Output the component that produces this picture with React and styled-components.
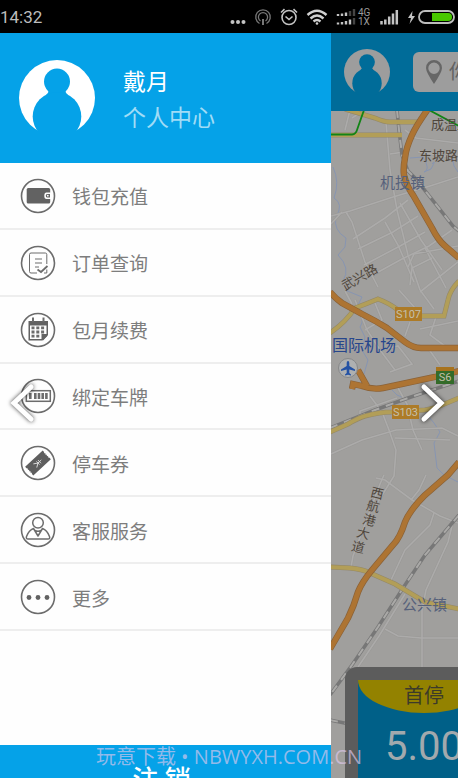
import React from 'react';
import styled, { createGlobalStyle } from 'styled-components';

const GlobalStyle = createGlobalStyle`
  * {
    box-sizing: border-box;
  }
  body {
    margin: 0;
    background: #000;
    font-family: Roboto, 'Noto Sans CJK SC', sans-serif;
  }
`;

const Phone = styled.div`
  position: relative;
  display: flex;
  flex-direction: column;
  height: 100vh;
  overflow: hidden;
`;

const StatusBar = styled.header`
  display: flex;
  flex: 0 0 33px;
  align-items: center;
  justify-content: space-between;
  padding-right: 3px;
  background: #000;
  color: #bdbdbd;
  font-size: 17px;
  svg {
    display: block;
  }
`;

const StatusIcons = styled.div`
  display: flex;
  align-items: center;
  gap: 8px;
`;

const StatusGroup = styled.div`
  display: flex;
  align-items: center;
  gap: 2px;
`;

const NetworkType = styled.div`
  width: 13px;
  font-size: 10px;
  line-height: 9px;
  color: #9a9a9a;
`;

const Screen = styled.div`
  display: flex;
  flex: 1;
  min-height: 0;
`;

const Drawer = styled.aside`
  display: flex;
  flex-direction: column;
  flex: 0 0 331px;
  background: #fefefe;
`;

const Profile = styled.div`
  display: flex;
  flex: 0 0 130px;
  align-items: center;
  gap: 28px;
  padding-left: 19px;
  background: #05a2e8;
`;

const ProfileText = styled.div`
  padding-top: 5px;
  font-size: 23px;
  line-height: 36px;
  color: #fff;
`;

const ProfileLink = styled.a`
  display: block;
  color: #a0dcf6;
  text-decoration: none;
`;

const Menu = styled.nav`
  display: grid;
  flex: 0 0 468px;
  grid-auto-rows: 1fr;
`;

const MenuItem = styled.a`
  display: flex;
  align-items: center;
  gap: 16px;
  padding: 1px 0 0 20px;
  border-bottom: 2px solid #eee;
  color: #7d7d7d;
  font-size: 19px;
  text-decoration: none;
`;

const LogoutButton = styled.button`
  flex: 0 0 64px;
  margin-top: 114px;
  padding: 0 8px 0 0;
  border: 0;
  background: #05a2e8;
  color: #fff;
  font-family: inherit;
  font-size: 26px;
  font-weight: 500;
`;

const Home = styled.main`
  display: flex;
  flex: 1;
  flex-direction: column;
  min-width: 0;
  overflow: hidden;
  background: #a09f9d;
`;

const HomeBar = styled.div`
  display: flex;
  flex: 0 0 78px;
  align-items: center;
  gap: 23px;
  padding-left: 13px;
  background: #006c99;
`;

const SearchBox = styled.label`
  display: flex;
  flex: 1 0 260px;
  align-items: center;
  gap: 6px;
  height: 40px;
  padding-left: 12px;
  border-radius: 6px;
  background: #9d9d9d;
`;

const SearchInput = styled.input`
  flex: 1;
  min-width: 0;
  padding: 0;
  border: 0;
  outline: 0;
  background: none;
  font-family: inherit;
  font-size: 20px;
  &::placeholder {
    color: #626262;
  }
`;

const MapArea = styled.div`
  position: relative;
  flex: 1;
  min-height: 0;
  overflow: hidden;
`;

const MapCanvas = styled.svg`
  display: block;
  width: 100%;
  height: 100%;
`;

const PriceCard = styled.section`
  position: absolute;
  top: 556px;
  left: 14px;
  width: 158px;
  height: 160px;
  border: 13px solid #5c5c5c;
  border-radius: 12px;
  background: #006088;
`;

const PriceTitle = styled.h2`
  height: 33px;
  margin: 0;
  border-radius: 0 0 50% 50% / 0 0 100% 100%;
  background: #938200;
  color: #3c3a2a;
  font-size: 20px;
  font-weight: 400;
  line-height: 33px;
  text-align: center;
`;

const Price = styled.div`
  padding: 10px 0 0 27px;
  color: #a2a9ad;
  font-size: 40px;
  line-height: 48px;
`;

const ArrowButton = styled.button`
  position: absolute;
  top: 383px;
  left: ${(props) => (props.$side === 'left' ? '8px' : 'auto')};
  right: ${(props) => (props.$side === 'right' ? '12px' : 'auto')};
  padding: 0;
  border: 0;
  background: none;
  svg {
    display: block;
    overflow: visible;
    filter: drop-shadow(0 0 2px rgba(0, 0, 0, 0.75));
  }
`;

const Watermark = styled.div`
  position: absolute;
  bottom: 7px;
  left: 0;
  width: 100%;
  color: rgba(222, 200, 236, 0.66);
  font-family: 'Open Sans', 'Noto Sans CJK SC', sans-serif;
  font-size: 20px;
  line-height: 28px;
  text-align: center;
  white-space: nowrap;
  pointer-events: none;
`;

const StyledAvatar = styled.svg`
  flex: none;
`;

const Avatar = ({ size, fill, back }) => (
  <StyledAvatar width={size} height={size} viewBox="0 0 76 76" aria-hidden="true">
    <circle cx="38" cy="38" r="38" fill={fill} />
    <g fill={back}>
      <circle cx="38" cy="21.6" r="13" />
      <path d="M29 30Q30.5 32 27 35L38 44L49 35Q45.500 32 47 30Z" />
      <circle cx="38" cy="56.500" r="24.300" />
    </g>
  </StyledAvatar>
);

const MenuIcon = ({ children }) => (
  <svg width="36" height="36" viewBox="0 0 36 36" fill="none" stroke="#6c6c6c" aria-hidden="true">
    <circle cx="18" cy="18" r="16.500" strokeWidth="1.600" />
    {children}
  </svg>
);

const items = [
  {
    label: '钱包充值',
    icon: (
      <>
        <rect x="6.700" y="10" width="23.500" height="15.500" rx="1.500" fill="#626262" stroke="none" />
        <path d="M31 14.500H26.500Q24.300 14.500 24.300 17.700Q24.300 21 26.500 21H31Z" fill="#fefefe" stroke="none" />
        <path d="M30 16H27Q25.800 16 25.800 17.700Q25.800 19.500 27 19.500H30Z" fill="#626262" stroke="none" />
        <circle cx="27.800" cy="17.700" r="0.900" fill="#fefefe" stroke="none" />
      </>
    ),
  },
  {
    label: '订单查询',
    icon: (
      <>
        <path d="M26.800 19V9.500Q26.800 8 25.300 8H11Q9.500 8 9.500 9.500V26.500Q9.500 28 11 28H17M24 28H26.800V24.500" />
        <path d="M15 14H22M15 18H22M15 22H19" />
        <path d="M17.500 24.500L21 27L27.500 21" strokeWidth="1.800" />
      </>
    ),
  },
  {
    label: '包月续费',
    icon: (
      <>
        <path d="M8.500 9H28V23L22.500 28.500H8.500Z" fill="#626262" stroke="none" />
        <path d="M13 5.500V10M23.500 5.500V10" strokeWidth="2" />
        <path d="M10 13.500H26.500V22H21.500V27H10Z" fill="#fefefe" stroke="none" />
        <path d="M11.500 15.800H24.500M11.500 20H24.500M11.500 24.200H20" strokeWidth="2.800" strokeDasharray="3 1.800" />
        <path d="M27.800 23.500L23 28.500V23.500Z" fill="#626262" stroke="none" />
      </>
    ),
  },
  {
    label: '绑定车牌',
    icon: (
      <>
        <rect x="6.300" y="12.700" width="24" height="10.600" strokeWidth="1.500" />
        <path d="M9 18H12M14 18H28.500" strokeWidth="6" strokeDasharray="2.600 1.100" />
      </>
    ),
  },
  {
    label: '停车券',
    icon: (
      <g transform="rotate(-43 18 18)">
        <path
          d="M6 12H30V14L29.200 15L30 16L29.200 17L30 18L29.200 19L30 20L29.200 21L30 22V24H6V22L6.800 21L6 20L6.800 19L6 18L6.800 17L6 16L6.800 15L6 14Z"
          fill="#5e5e5e"
          stroke="none"
        />
        <path d="M14 15.500L18 18L14 20.500M18 18H22.500M18 15.800V20.200M20 15.800V20.200" stroke="#dcdcdc" strokeWidth="0.900" />
      </g>
    ),
  },
  {
    label: '客服服务',
    icon: (
      <>
        <circle cx="18" cy="10.700" r="5.300" strokeWidth="1.500" />
        <path
          d="M13.500 16.500Q9 18 6.500 24.500Q5.800 27 8 27H28Q30.300 27 29.500 24.500Q27 18 22.500 16.500L18 24L13.500 16.500ZM15 18.500Q18 20 21 18.500"
          strokeWidth="1.500"
          strokeLinejoin="round"
        />
      </>
    ),
  },
  {
    label: '更多',
    icon: (
      <g fill="#626262" stroke="none">
        <circle cx="9" cy="18.500" r="2.400" />
        <circle cx="18" cy="18.500" r="2.400" />
        <circle cx="27" cy="18.500" r="2.400" />
      </g>
    ),
  },
];

// Major roads get a darker casing under the coloured line
const highways = [
  'M428 109Q416 126 412 135Q406 148 405 158Q403 168 404 175Q407 187 413 195L432 228Q438 240 445 246L459 258',
  'M330 292Q336 299 342 303L362 314Q376 321 387 328L405 342Q413 348 421 348H459',
  'M352 389L353 384L362 386Q373 390 383 388L435 377L459 371M358 370L367 386',
  'M459 462L448 475L425 495Q410 510 405 522Q400 538 393 545L372 570Q362 582 358 592Q354 606 348 618L330 649',
];

const mainRoads = [
  'M345 109L375 118Q384 122 390 122H418',
  'M330 135H402',
  'M330 333Q346 322 355 308Q366 304 378 299Q389 303 398 310Q406 315 415 316H444L448 300Q450 290 459 281',
  'M330 432L348 424Q358 418 365 416Q380 412 392 412L425 410Q436 408 442 405L459 398',
  'M330 567L350 568Q362 569 370 573L395 584L425 602L459 609',
];

const railways = [
  'M397 110L399 130L402 155L408 171L415 178L453 226L460 232',
  'M330 428L375 410L408 398L459 381',
  'M459 515L425 555L405 585L378 627L352 665L330 695',
  'M330 720L354 725',
];

const streets = [
  'M350 110L345 130M365 110L352 118M386 122L390 170L397 210L408 255L420 290',
  'M404 152L390 154M405 130L416 138L458 143M418 152L458 158',
  'M331 216L350 211L393 197L430 186L458 177M346 212L352 222L365 262L378 287M331 224L342 212',
  'M353 239L385 218L408 200M358 249L393 232L418 216M364 265L400 246L425 232',
  'M371 276L402 259L429 246L452 230M385 222L398 245L414 282M400 203L421 240L442 270',
  'M408 267L414 254L458 246M410 285L412 268L432 258M420 292L458 262M425 248L446 288',
  'M345 291L352 304M355 300L367 330L380 350L395 370M375 303L382 320L365 330',
  'M399 290L415 308M420 290L434 309M380 350L398 346L412 364L390 372',
  'M428 348L440 365M410 322L405 336M436 317L430 335L445 346M420 329L458 321',
  'M370 396L382 412L389 430L396 450L394 476L376 505M398 388L407 404L413 430L422 450',
  'M331 454L362 440L396 430L442 428L458 436M395 438L450 440M360 419L360 411L397 398',
  'M376 478L385 480L412 500L440 516L458 523M384 475L380 484L353 556L351 567',
  'M426 475L419 490L411 500M434 513L430 525L405 550L391 580M453 522L448 542L426 590L422 610V667',
  'M385 629L398 636L421 638L458 638M358 667L379 636L405 594',
];

const streams = [
  'M333 167Q340 182 334 198Q344 204 336 217Q333 230 346 238L345 247L338 255Q351 268 343 281',
  'M410 158L423 157Q431 170 424 172L431 169Q437 158 432 164M452 156L454 166L458 172',
  'M345 290L362 297L356 309Q366 319 360 327L365 337L362 350L368 360L364 374',
  'M392 390L397 395L406 399L405 408L421 409M425 412L434 423L440 432L434 443L437 468L444 475L458 482',
];

const MapSign = ({ x, y, width, text, fill, top }) => (
  <g>
    <rect x={x} y={y} width={width} height={top ? 17 : 14} fill={fill} />
    {top && <rect x={x} y={y} width={width} height="4" fill={top} />}
    <text x={x + width / 2} y={y + (top ? 14 : 11)} fill="#c4c0ac" fontSize="11" textAnchor="middle">
      {text}
    </text>
  </g>
);

const CityMap = () => (
  <MapCanvas viewBox="331 111 127 667" preserveAspectRatio="xMinYMin slice" fill="none">
    <rect x="331" y="111" width="400" height="700" fill="#a09f9d" />
    {streams.map((d) => (
      <path key={d} d={d} stroke="#8795b2" strokeWidth="1" />
    ))}
    {streets.map((d) => (
      <path key={d} d={d} stroke="#999896" strokeWidth="2.600" />
    ))}
    {streets.map((d) => (
      <path key={d} d={d} stroke="#acabaa" strokeWidth="1.600" />
    ))}
    {railways.map((d) => (
      <g key={d}>
        <path d={d} stroke="#777" strokeWidth="3.500" />
        <path d={d} stroke="#aaa9a7" strokeWidth="2" strokeDasharray="8 7" />
      </g>
    ))}
    {mainRoads.map((d) => (
      <g key={d}>
        <path d={d} stroke="#948867" strokeWidth="5" />
        <path d={d} stroke="#b29e58" strokeWidth="3.800" />
      </g>
    ))}
    <path d="M331 134.500H352Q356 134 357 130L364 110M429 110L459 126" stroke="#128416" strokeWidth="1.800" />
    {highways.map((d) => (
      <g key={d}>
        <path d={d} stroke="#8a6238" strokeWidth="6.400" />
        <path d={d} stroke="#ad7433" strokeWidth="5" />
      </g>
    ))}
    <MapSign x={395} y={307} width={27} text="S107" fill="#ad7b27" />
    <MapSign x={392} y={405} width={27} text="S103" fill="#ad7b27" />
    <MapSign x={436} y={367} width={18} text="S6" fill="#336b29" top="#a8731d" />
    <circle cx="348" cy="368" r="9.500" fill="#aeb0b1" stroke="#878889" />
    <path
      d="M348 361Q349.300 361 349.300 363V366L355 369.500V371L349.300 369.500V373L351 374.500V375.500L348 374.700L345 375.500V374.500L346.700 373V369.500L341 371V369.500L346.700 366V363Q346.700 361 348 361Z"
      fill="#2452a4"
    />
    <g fill="#4f463c" fontSize="13">
      <text x="431" y="129">成温立交</text>
      <text x="419" y="160">东坡路</text>
      <text x="345" y="291" transform="rotate(-30 345 291)">武兴路</text>
      <text x="371" y="498" transform="rotate(14 378 492)">西</text>
      <text x="367" y="511" transform="rotate(14 374 505)">航</text>
      <text x="363" y="525" transform="rotate(14 370 519)">港</text>
      <text x="357" y="538" transform="rotate(14 364 532)">大</text>
      <text x="352" y="552" transform="rotate(14 359 546)">道</text>
    </g>
    <g fill="#56617b" fontSize="15">
      <text x="380" y="188">机投镇</text>
      <text x="402" y="610">公兴镇</text>
    </g>
    <text x="332" y="351" fill="#27468c" fontSize="16">国际机场</text>
  </MapCanvas>
);

const App = () => {
  return (
    <Phone>
      <GlobalStyle />
      <StatusBar>
        <time>14:32</time>
        <StatusIcons>
          <svg width="16" height="18" fill="#c4c4c4">
            <circle cx="2.500" cy="14" r="2" />
            <circle cx="8" cy="14" r="2" />
            <circle cx="13.500" cy="14" r="2" />
          </svg>
          <svg width="18" height="18" fill="none" stroke="#777" strokeWidth="1.300">
            <path d="M5.500 15.500A7.300 7.300 0 1 1 12.500 15.500M6.500 13A4.600 4.600 0 1 1 11.500 13" />
            <path d="M9 11V17" strokeWidth="2" />
          </svg>
          <svg width="18" height="18" fill="none" stroke="#c4c4c4" strokeWidth="1.600">
            <circle cx="9" cy="9.500" r="7" />
            <path d="M5.500 8.500L9 11.500L12.500 8.500M1 4.500L4.500 1.200M17 4.500L13.500 1.200" />
          </svg>
          <svg width="22" height="18" fill="none" stroke="#d0d0d0" strokeWidth="2.400">
            <path d="M1.500 7Q11 -1.500 20.500 7M4.500 10.500Q11 4.500 17.500 10.500M7.500 13.500Q11 10.500 14.500 13.500" />
            <circle cx="11" cy="15.500" r="1.300" fill="#d0d0d0" stroke="none" />
          </svg>
          <StatusGroup>
            <svg width="20" height="18" fill="none" strokeWidth="2.400">
              <path d="M2 8V6M6 8V5.500M10 8V4.500" stroke="#c4c4c4" />
              <path d="M14 8V3M18 8V1" stroke="#444" />
              <path d="M2 16.500V14.500M6 16.500V14M10 16.500V13M14 16.500V11.500" stroke="#c4c4c4" />
              <path d="M18 16.500V10" stroke="#444" />
            </svg>
            <NetworkType>4G 1X</NetworkType>
          </StatusGroup>
          <svg width="20" height="18" stroke="#c4c4c4" strokeWidth="2.500">
            <path d="M2.500 16.500V13M6.300 16.500V11.500M10.200 16.500V8.500M14 16.500V5.500M17.800 16.500V2" />
          </svg>
          <StatusGroup>
            <svg width="9" height="18">
              <path d="M5.500 3L1 10H4L2.500 16L8 8H5Z" fill="#c4c4c4" />
            </svg>
            <svg width="37" height="18" fill="none">
              <rect x="1" y="3" width="35" height="12" rx="6" stroke="#bdbdbd" strokeWidth="1.800" />
              <path d="M14 5H30Q34 5 34 9Q34 13 30 13H14Z" fill="#48c800" />
            </svg>
          </StatusGroup>
        </StatusIcons>
      </StatusBar>
      <Screen>
        <Drawer>
          <Profile>
            <Avatar size={76} fill="#fff" back="#05a2e8" />
            <ProfileText>
              戴月
              <ProfileLink href="#">个人中心</ProfileLink>
            </ProfileText>
          </Profile>
          <Menu>
            {items.map((item) => (
              <MenuItem key={item.label} href="#">
                <MenuIcon>{item.icon}</MenuIcon>
                {item.label}
              </MenuItem>
            ))}
          </Menu>
          <LogoutButton>注 销</LogoutButton>
        </Drawer>
        <Home>
          <HomeBar>
            <Avatar size={46} fill="#9d9d9d" back="#006c99" />
            <SearchBox>
              <svg width="18" height="26" viewBox="0 0 18 26" aria-hidden="true">
                <path
                  d="M9 1A8 8 0 0 0 1 9Q1 13 9 25Q17 13 17 9A8 8 0 0 0 9 1ZM9 3.500A5.700 5.700 0 1 1 9 14.900A5.700 5.700 0 1 1 9 3.500Z"
                  fill="#666"
                  fillRule="evenodd"
                />
              </svg>
              <SearchInput aria-label="目的地" placeholder="你要去哪" />
            </SearchBox>
          </HomeBar>
          <MapArea>
            <CityMap />
            <PriceCard>
              <PriceTitle>首停</PriceTitle>
              <Price>5.00</Price>
            </PriceCard>
          </MapArea>
        </Home>
      </Screen>
      <ArrowButton $side="left" aria-label="上一张">
        <svg width="26" height="40" fill="none" stroke="#fff" strokeWidth="5">
          <path d="M23 4L6 20L23 36" strokeLinecap="round" />
        </svg>
      </ArrowButton>
      <ArrowButton $side="right" aria-label="下一张">
        <svg width="26" height="40" fill="none" stroke="#fff" strokeWidth="5">
          <path d="M4 4L21 20L4 36" strokeLinecap="round" />
        </svg>
      </ArrowButton>
      <Watermark>玩意下载 • NBWYXH.COM.CN</Watermark>
    </Phone>
  );
};

export default App;
